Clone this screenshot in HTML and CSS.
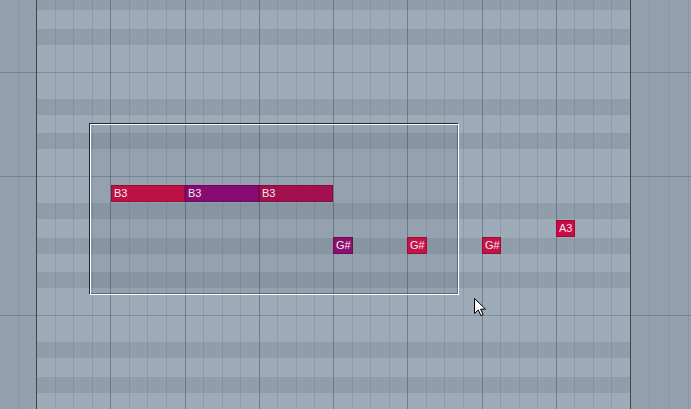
FILE: index.html
```html
<!DOCTYPE html>
<html>
<head>
<meta charset="utf-8">
<link rel="stylesheet" href="styles.css">
</head>
<body>
<div class="roll">
  <div class="side side-left">
    <div class="rows">
      <div class="r"></div><div class="r"></div><div class="r"></div><div class="r"></div>
      <div class="r m"></div><div class="r"></div><div class="r"></div><div class="r"></div>
      <div class="r"></div><div class="r"></div><div class="r m"></div><div class="r"></div>
      <div class="r"></div><div class="r"></div><div class="r"></div><div class="r"></div>
      <div class="r"></div><div class="r"></div><div class="r m"></div><div class="r"></div>
      <div class="r"></div><div class="r"></div><div class="r"></div><div class="r"></div>
    </div>
    <div class="vl vl-left"><span></span><span class="ln"></span></div>
  </div>
  <div class="edge"></div>
  <div class="grid">
    <div class="rows">
      <div class="r d"></div><div class="r"></div><div class="r d"></div><div class="r"></div>
      <div class="r m"></div><div class="r"></div><div class="r d"></div><div class="r"></div>
      <div class="r d"></div><div class="r"></div><div class="r m"></div><div class="r"></div>
      <div class="r d"></div><div class="r"></div><div class="r d"></div><div class="r"></div>
      <div class="r d"></div><div class="r"></div><div class="r m"></div><div class="r"></div>
      <div class="r d"></div><div class="r"></div><div class="r d"></div><div class="r"></div>
    </div>
    <div class="vl bars">
      <div class="bar first"><i></i><i></i><i></i><i></i></div>
      <div class="bar"><i></i><i></i><i></i><i></i></div>
      <div class="bar"><i></i><i></i><i></i><i></i></div>
      <div class="bar"><i></i><i></i><i></i><i></i></div>
      <div class="bar"><i></i><i></i><i></i><i></i></div>
      <div class="bar"><i></i><i></i><i></i><i></i></div>
      <div class="bar"><i></i><i></i><i></i><i></i></div>
      <div class="bar"><i></i><i></i><i></i><i></i></div>
    </div>
    <div class="sel"></div>
    <div class="note n-red" style="left:74px;top:185px;width:74px">B3</div>
    <div class="note n-purple" style="left:148px;top:185px;width:74px">B3</div>
    <div class="note n-wine" style="left:222px;top:185px;width:74px">B3</div>
    <div class="note n-purple2" style="left:296px;top:237px;width:20px">G#</div>
    <div class="note n-red2" style="left:370px;top:237px;width:20px">G#</div>
    <div class="note n-red2" style="left:445px;top:237px;width:19px">G#</div>
    <div class="note n-red3" style="left:519px;top:220px;width:19px">A3</div>
  </div>
  <div class="edge"></div>
  <div class="side side-right">
    <div class="rows">
      <div class="r"></div><div class="r"></div><div class="r"></div><div class="r"></div>
      <div class="r m"></div><div class="r"></div><div class="r"></div><div class="r"></div>
      <div class="r"></div><div class="r"></div><div class="r m"></div><div class="r"></div>
      <div class="r"></div><div class="r"></div><div class="r"></div><div class="r"></div>
      <div class="r"></div><div class="r"></div><div class="r m"></div><div class="r"></div>
      <div class="r"></div><div class="r"></div><div class="r"></div><div class="r"></div>
    </div>
    <div class="vl vl-right"><span class="w18"></span><span class="ln w18"></span><span class="ln w19"></span><span class="ln w5"></span></div>
  </div>
  <svg class="cursor" width="13" height="20" viewBox="0 0 13 20">
    <path d="M0.5 0.5 L0.5 15.5 L4.3 11.9 L6.9 17.6 L9.1 16.6 L6.6 11.1 L11.5 11.1 Z" fill="#ffffff" stroke="#000000" stroke-width="1" stroke-linejoin="miter"/>
  </svg>
</div>
</body>
</html>
```

FILE: styles.css
```css
html, body {
  margin: 0;
  padding: 0;
  width: 691px;
  height: 409px;
  overflow: hidden;
  background: #93a0ad;
}

.roll {
  position: relative;
  display: flex;
  width: 691px;
  height: 409px;
  overflow: hidden;
}

.side {
  position: relative;
  background: #93a0ad;
  overflow: hidden;
}

.side-left { width: 36px; }
.side-right { width: 60px; }

.edge {
  width: 1px;
  background: #48443f;
  position: relative;
  z-index: 3;
}

.grid {
  position: relative;
  width: 593px;
  background: #9eabb9;
  overflow: hidden;
}

.rows {
  display: flex;
  flex-direction: column;
  margin-top: -5.8px;
}

.r {
  position: relative;
  height: 17.4px;
  flex: none;
}

.grid .r { background: #9eabb9; }
.grid .r.d {
  background: linear-gradient(to bottom, #909eac 0, #909eac 16px, #9eabb9 16px);
}

.r.m::after {
  content: "";
  position: absolute;
  left: 0;
  right: 0;
  top: 8px;
  height: 1px;
  background: rgba(55, 75, 98, 0.32);
}

.vl {
  position: absolute;
  inset: 0;
  display: flex;
}

.vl-left span { width: 18px; flex: none; }
.vl-right span { flex: none; }
.vl-right .w18 { width: 18px; }
.vl-right .w19 { width: 19px; }
.vl-right .w5 { width: 5px; }
.vl .ln { border-left: 1px solid rgba(80, 96, 116, 0.14); }

.bars .bar {
  flex: 1 1 0;
  display: flex;
  border-left: 1px solid rgba(50, 65, 85, 0.42);
}
.bars .bar.first { border-left: 0; }

.bar i {
  flex: 1 1 0;
}
.bar i + i {
  border-left: 1px solid rgba(80, 95, 115, 0.2);
}

.sel {
  position: absolute;
  left: 53px;
  top: 124px;
  width: 369px;
  height: 171px;
  box-sizing: border-box;
  border: 1px solid #ffffff;
  background: rgba(25, 40, 58, 0.07);
  box-shadow: -1px -1px 0 0 #1e2731, inset -1px -1px 0 0 rgba(30, 40, 52, 0.45);
}

.note {
  position: absolute;
  height: 17px;
  box-sizing: border-box;
  padding-left: 3px;
  font-family: "Liberation Sans", Arial, sans-serif;
  font-size: 11px;
  line-height: 17px;
  color: #f3e8f0;
  white-space: nowrap;
  overflow: hidden;
  box-shadow: inset 0 0 0 1px rgba(40, 0, 20, 0.28);
  z-index: 2;
}

.n-red { background: #bc1142; }
.n-purple { background: #870c72; }
.n-wine { background: #a3104f; }
.n-purple2 { background: #8a0f6e; }
.n-red2 { background: #c41345; }
.n-red3 { background: #cc0a44; }

.cursor {
  position: absolute;
  left: 474px;
  top: 298px;
  z-index: 5;
}
```
